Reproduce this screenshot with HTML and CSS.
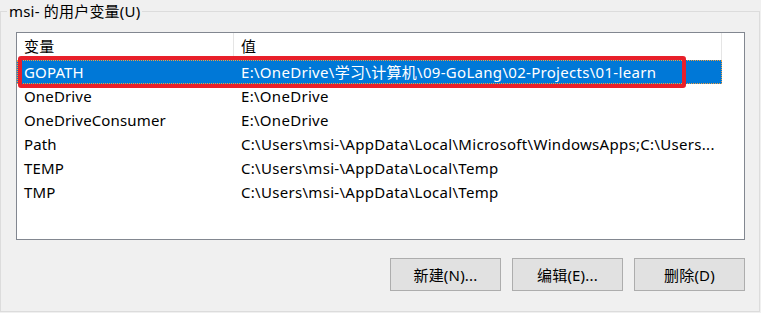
FILE: index.html
```html
<!DOCTYPE html>
<html lang="zh-CN">
<head>
<meta charset="utf-8">
<title>用户变量</title>
<link rel="stylesheet" href="styles.css">
</head>
<body>
<fieldset class="group">
  <legend class="group-title">msi- 的用户变量(U)</legend>
  <div class="listbox">
    <div class="list-head">
      <div class="cell c-name">变量</div>
      <div class="cell c-value">值</div>
    </div>
    <div class="row selected">
      <div class="cell c-name">GOPATH</div>
      <div class="cell c-value">E:\OneDrive\学习\计算机\09-GoLang\02-Projects\01-learn</div>
    </div>
    <div class="row">
      <div class="cell c-name">OneDrive</div>
      <div class="cell c-value">E:\OneDrive</div>
    </div>
    <div class="row">
      <div class="cell c-name">OneDriveConsumer</div>
      <div class="cell c-value">E:\OneDrive</div>
    </div>
    <div class="row">
      <div class="cell c-name">Path</div>
      <div class="cell c-value">C:\Users\msi-\AppData\Local\Microsoft\WindowsApps;C:\Users...</div>
    </div>
    <div class="row">
      <div class="cell c-name">TEMP</div>
      <div class="cell c-value">C:\Users\msi-\AppData\Local\Temp</div>
    </div>
    <div class="row">
      <div class="cell c-name">TMP</div>
      <div class="cell c-value">C:\Users\msi-\AppData\Local\Temp</div>
    </div>
    <div class="highlight-box"></div>
  </div>
  <div class="buttons">
    <button class="btn">新建(N)...</button>
    <button class="btn">编辑(E)...</button>
    <button class="btn">删除(D)</button>
  </div>
</fieldset>
</body>
</html>
```
FILE: styles.css
```css
html, body {
  margin: 0;
  padding: 0;
  background: #f0f0f0;
}
body {
  font-family: "Noto Sans", "Noto Sans CJK SC", sans-serif;
  font-size: 15px;
  color: #000;
  padding-top: 3px;
}
.group {
  box-sizing: border-box;
  width: 760px;
  height: 309px;
  margin: 0;
  padding: 13px 14px 0 15px;
  border: 1px solid #dcdcdc;
  min-width: 0;
}
.group-title {
  padding: 0 2px;
  margin-left: -9px;
  line-height: 16px;
  letter-spacing: 0.2px;
  color: #000;
}
.listbox {
  position: relative;
  box-sizing: border-box;
  width: 729px;
  height: 208px;
  border: 1px solid #828790;
  background: #fff;
}
.list-head, .row {
  display: flex;
  width: 705px;
}
.list-head {
  height: 27px;
  line-height: 27px;
}
.list-head .cell {
  border-right: 1px solid #e5e5e5;
}
.row {
  height: 24px;
  line-height: 24px;
}
.cell {
  box-sizing: border-box;
  padding-left: 7px;
  white-space: nowrap;
  overflow: hidden;
}
.c-name { width: 217px; letter-spacing: 0.15px; }
.c-value { width: 488px; letter-spacing: 0.3px; }
.row.selected {
  background: #0078d7;
  color: #fff;
  outline: 1px dotted #f0a040;
  outline-offset: -1px;
}
.highlight-box {
  position: absolute;
  left: 1px;
  top: 23px;
  width: 668px;
  height: 32px;
  box-sizing: border-box;
  border: 4px solid #e8202a;
  border-radius: 3px;
}
.buttons {
  display: flex;
  justify-content: flex-end;
  gap: 11px;
  width: 729px;
  margin-top: 18px;
}
.btn {
  box-sizing: border-box;
  width: 111px;
  height: 33px;
  background: #e1e1e1;
  border: 1px solid #adadad;
  font-family: "Noto Sans", "Noto Sans CJK SC", sans-serif;
  font-size: 15px;
  letter-spacing: 0.2px;
  color: #000;
  padding: 0;
}
```
